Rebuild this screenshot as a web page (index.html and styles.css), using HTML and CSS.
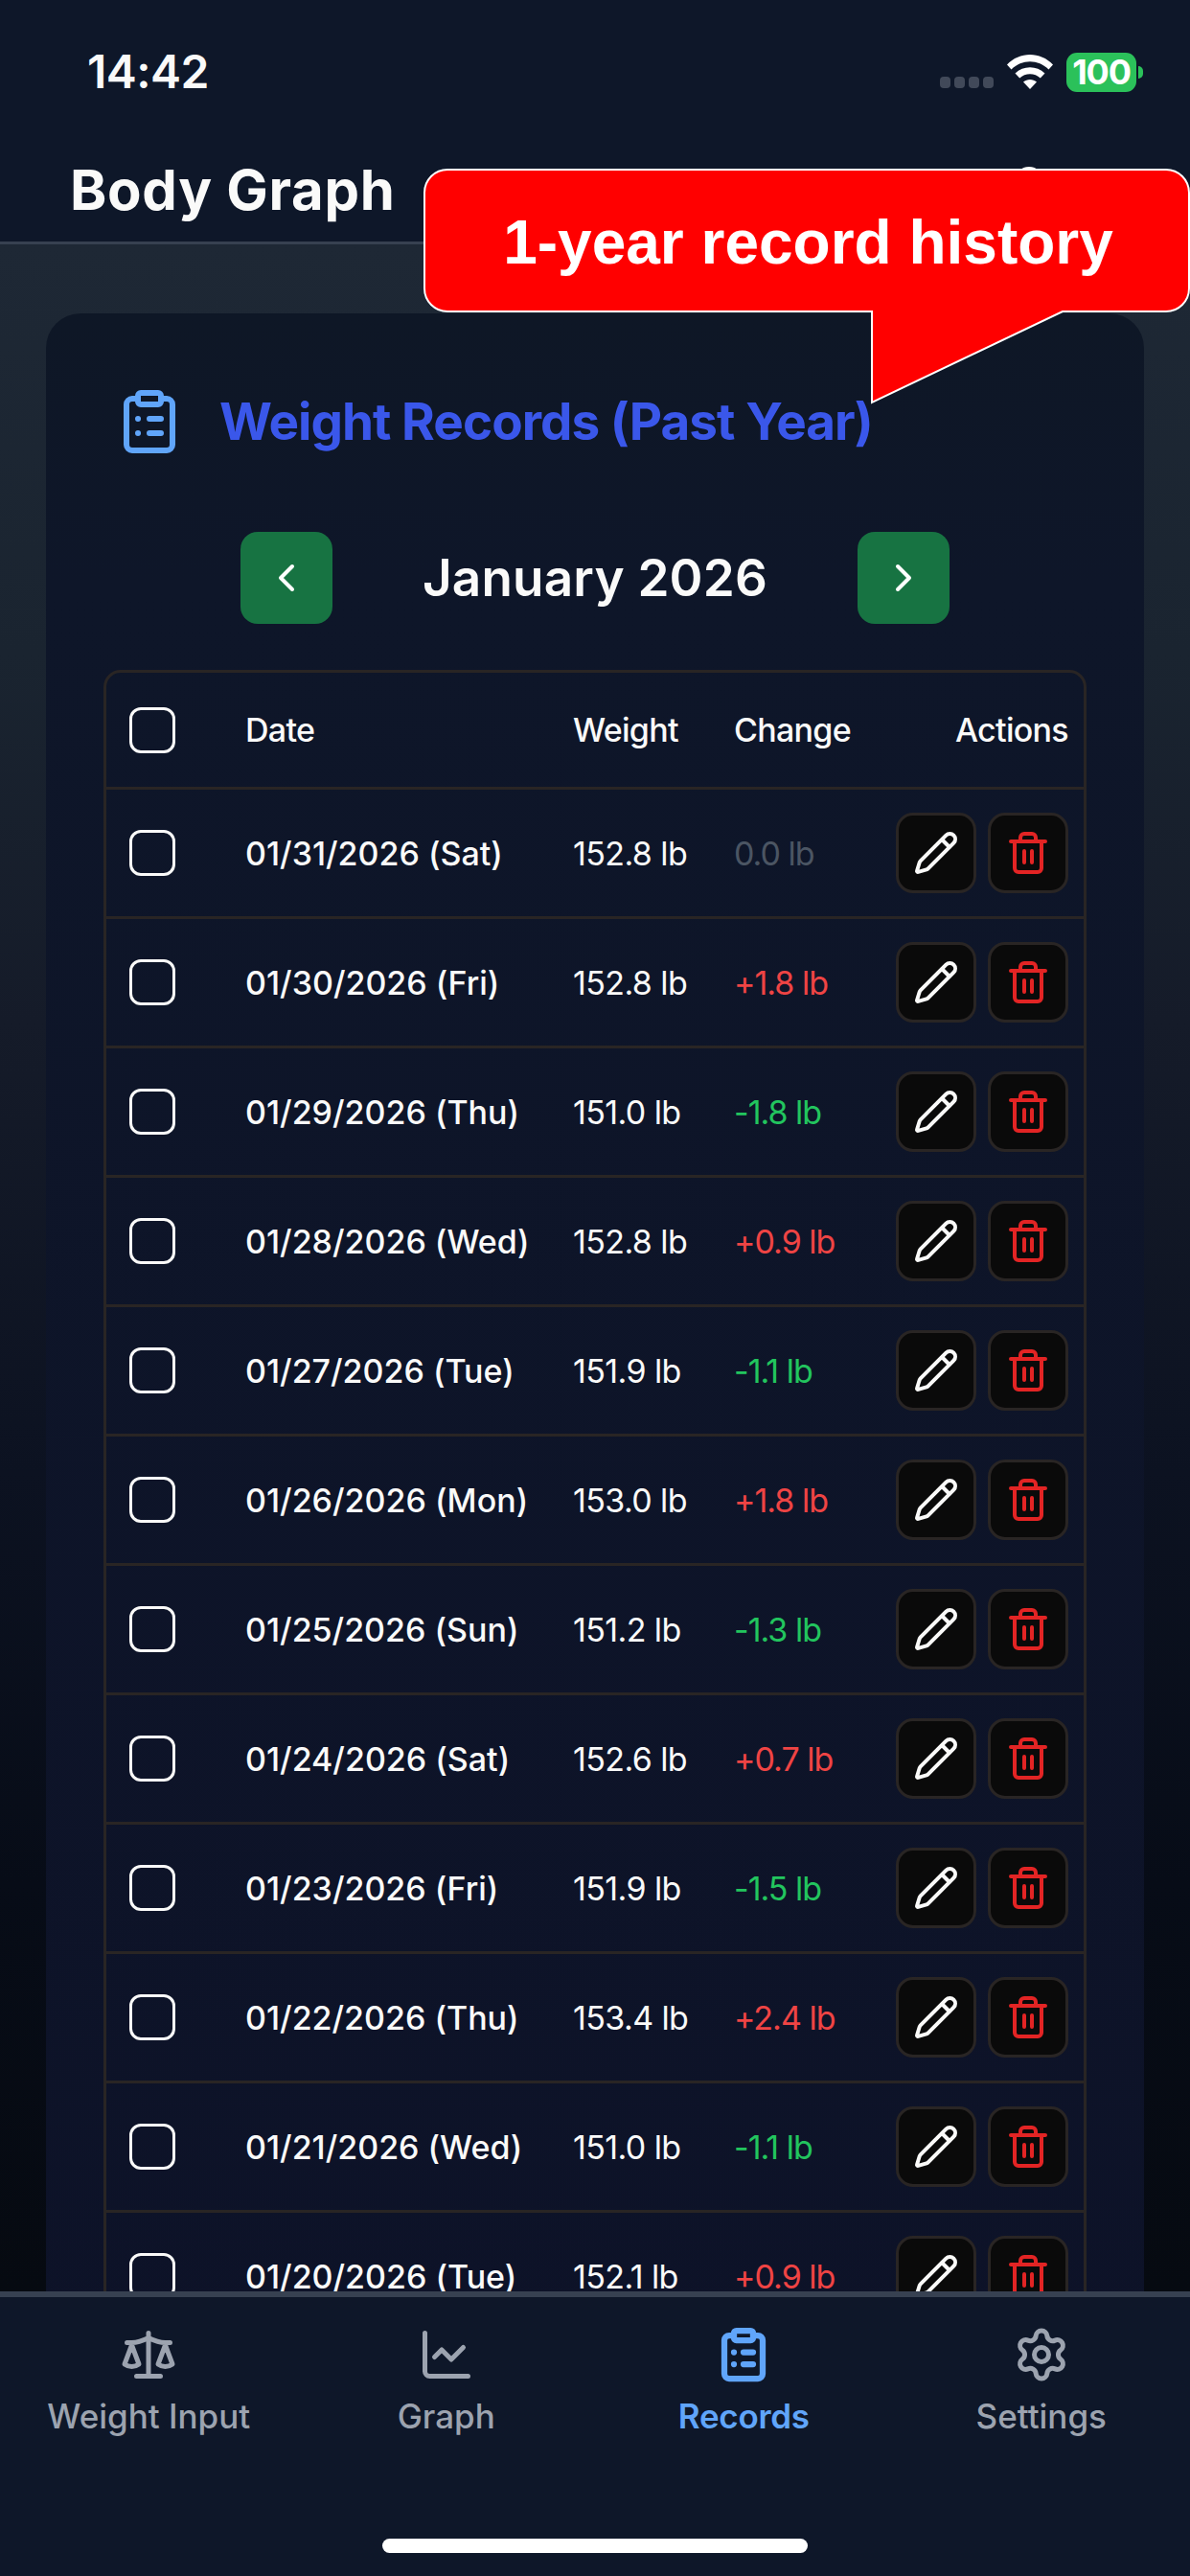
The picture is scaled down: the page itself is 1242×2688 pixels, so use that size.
FILE: index.html
```html
<!DOCTYPE html>
<html lang="en">
<head>
    <meta charset="UTF-8">
    <meta name="viewport" content="width=device-width, initial-scale=1.0">
    <title>Body Graph</title>
    <link rel="stylesheet" href="styles.css">
</head>
<body>
    <!-- icon set -->
    <svg class="sprite" xmlns="http://www.w3.org/2000/svg">
        <symbol id="clipboard" viewBox="0 0 24 24">
            <rect x="8" y="2" width="8" height="4" rx="1"/>
            <path d="M16 4h2a2 2 0 0 1 2 2v14a2 2 0 0 1-2 2H6a2 2 0 0 1-2-2V6a2 2 0 0 1 2-2h2M12 11h4M12 16h4M8 11h.01M8 16h.01"/>
        </symbol>
        <symbol id="left" viewBox="0 0 24 24"><path d="m15 18-6-6 6-6"/></symbol>
        <symbol id="right" viewBox="0 0 24 24"><path d="m9 18 6-6-6-6"/></symbol>
        <symbol id="pencil" viewBox="0 0 24 24">
            <path d="M21.174 6.812a1 1 0 0 0-3.986-3.987L3.842 16.174a2 2 0 0 0-.5.83l-1.321 4.352a.5.5 0 0 0 .623.622l4.353-1.32a2 2 0 0 0 .83-.497zM15 5l4 4"/>
        </symbol>
        <symbol id="trash" viewBox="0 0 24 24">
            <path d="M3 6h18M19 6v14a2 2 0 0 1-2 2H7a2 2 0 0 1-2-2V6M8 6V4a2 2 0 0 1 2-2h4a2 2 0 0 1 2 2v2M10 11v6M14 11v6"/>
        </symbol>
        <symbol id="scale" viewBox="0 0 24 24">
            <path d="m16 16 3-8 3 8c-.87.65-1.92 1-3 1s-2.13-.35-3-1ZM2 16l3-8 3 8c-.87.65-1.92 1-3 1s-2.13-.35-3-1ZM7 21h10M12 3v18M3 7h2c2 0 5-1 7-2 2 1 5 2 7 2h2"/>
        </symbol>
        <symbol id="chart" viewBox="0 0 24 24">
            <path d="M3 3v16a2 2 0 0 0 2 2h16M19 9l-5 5-4-4-3 3"/>
        </symbol>
        <symbol id="gear" viewBox="0 0 24 24">
            <path d="M9.671 4.136a2.34 2.34 0 0 1 4.659 0 2.34 2.34 0 0 0 3.319 1.915 2.34 2.34 0 0 1 2.33 4.033 2.34 2.34 0 0 0 0 3.831 2.34 2.34 0 0 1-2.33 4.033 2.34 2.34 0 0 0-3.319 1.915 2.34 2.34 0 0 1-4.659 0 2.34 2.34 0 0 0-3.32-1.915 2.34 2.34 0 0 1-2.33-4.033 2.34 2.34 0 0 0 0-3.831A2.34 2.34 0 0 1 6.35 6.051a2.34 2.34 0 0 0 3.319-1.915"/>
            <circle cx="12" cy="12" r="3"/>
        </symbol>
        <symbol id="user" viewBox="0 0 24 24">
            <circle cx="12" cy="7" r="4"/>
            <path d="M19 21v-2a4 4 0 0 0-4-4H9a4 4 0 0 0-4 4v2"/>
        </symbol>
    </svg>

    <div class="statusbar">
        <span class="time">14:42</span>
        <div class="signal"><i></i><i></i><i></i><i></i></div>
        <svg class="wifi" viewBox="0 0 48 36">
            <path d="M0 10.5C13-3.500 35-3.500 48 10.500L43.500 15.500C32.500 4.500 15.500 4.500 4.500 15.500Z"/>
            <path d="M8.500 19.500C17 11 31 11 39.500 19.500L34.800 24.600C29 18.800 19 18.800 13.200 24.600Z"/>
            <path d="M17 28.500C21 25 27 25 31 28.500L24 36Z"/>
        </svg>
        <span class="battery">100</span>
        <span class="nub"></span>
    </div>

    <header class="header">
        <h1>Body Graph</h1>
        <svg class="icon userIcon"><use href="#user"/></svg>
    </header>

    <main class="main">
        <section class="card">
            <div class="cardTitle">
                <svg class="icon"><use href="#clipboard"/></svg>
                <h2>Weight Records (Past Year)</h2>
            </div>
            <div class="monthNav">
                <button class="monthButton"><svg class="icon"><use href="#left"/></svg></button>
                <span class="month">January 2026</span>
                <button class="monthButton"><svg class="icon"><use href="#right"/></svg></button>
            </div>
            <div class="table">
                <div class="row head">
                    <span class="checkbox"></span>
                    <span class="date">Date</span>
                    <span class="headWeight">Weight</span>
                    <span class="headChange">Change</span>
                    <span class="headActions">Actions</span>
                </div>
                <div id="records"></div>
            </div>
        </section>
    </main>

    <nav class="tabbar">
        <div class="tabs">
            <a class="tab"><svg class="icon"><use href="#scale"/></svg>Weight Input</a>
            <a class="tab"><svg class="icon"><use href="#chart"/></svg>Graph</a>
            <a class="tab active"><svg class="icon"><use href="#clipboard"/></svg>Records</a>
            <a class="tab"><svg class="icon"><use href="#gear"/></svg>Settings</a>
        </div>
        <div class="homeIndicator"></div>
    </nav>

    <div class="callout">
        <svg class="bubble" viewBox="0 0 801 248">
            <path d="M26 2H776a24 24 0 0 1 24 24V126a24 24 0 0 1-24 24H668L469 245V150H26a24 24 0 0 1-24-24V26A24 24 0 0 1 26 2Z"/>
        </svg>
        <span class="calloutText">1-year record history</span>
    </div>

    <script>
        const records = [
            ['01/31/2026 (Sat)', '152.8', '0.0'],
            ['01/30/2026 (Fri)', '152.8', '+1.8'],
            ['01/29/2026 (Thu)', '151.0', '-1.8'],
            ['01/28/2026 (Wed)', '152.8', '+0.9'],
            ['01/27/2026 (Tue)', '151.9', '-1.1'],
            ['01/26/2026 (Mon)', '153.0', '+1.8'],
            ['01/25/2026 (Sun)', '151.2', '-1.3'],
            ['01/24/2026 (Sat)', '152.6', '+0.7'],
            ['01/23/2026 (Fri)', '151.9', '-1.5'],
            ['01/22/2026 (Thu)', '153.4', '+2.4'],
            ['01/21/2026 (Wed)', '151.0', '-1.1'],
            ['01/20/2026 (Tue)', '152.1', '+0.9']
        ];

        function changeClass(change) {
            if (change[0] === '+') return 'up';
            if (change[0] === '-') return 'down';
            return 'same';
        }

        document.getElementById('records').innerHTML = records.map(([date, weight, change]) => `
            <div class="row">
                <span class="checkbox"></span>
                <span class="date">${date}</span>
                <span class="weight">${weight} lb</span>
                <span class="change ${changeClass(change)}">${change} lb</span>
                <span class="actions">
                    <button class="action"><svg class="icon"><use href="#pencil"/></svg></button>
                    <button class="action delete"><svg class="icon"><use href="#trash"/></svg></button>
                </span>
            </div>
        `).join('');
    </script>
</body>
</html>
```
FILE: styles.css
```css
* {
    box-sizing: border-box;
}

body {
    display: flex;
    flex-direction: column;
    width: 1242px;
    height: 2688px;
    margin: 0;
    overflow: hidden;
    position: relative;
    background-color: #0e1729;
    color: #fafaf9;
    font-family: Inter, "Liberation Sans", sans-serif;
}

h1, h2 {
    margin: 0;
}

button {
    display: flex;
    align-items: center;
    justify-content: center;
    padding: 0;
    border: none;
}

.sprite {
    display: none;
}

.icon {
    display: block;
    flex: none;
    width: 48px;
    height: 48px;
    fill: none;
    stroke: currentColor;
    stroke-width: 2;
    stroke-linecap: round;
    stroke-linejoin: round;
}

.statusbar {
    display: flex;
    align-items: center;
    height: 132px;
    padding: 18px 49px 0 91px;
}

.time {
    flex: 1;
    font-size: 48px;
    font-weight: 600;
    line-height: 48px;
    letter-spacing: -0.5px;
}

.signal {
    display: flex;
    gap: 4px;
    margin: 21px 14px 0 0;
}

.signal i {
    width: 11px;
    height: 12px;
    border-radius: 4px;
    background-color: #414959;
}

.wifi {
    width: 48px;
    height: 36px;
    margin-right: 14px;
    fill: #fff;
}

.battery {
    width: 73px;
    height: 41px;
    border-radius: 11px;
    background-color: #2bc15a;
    color: #fff;
    font-size: 36px;
    font-weight: 700;
    line-height: 41px;
    letter-spacing: -1.2px;
    text-align: center;
}

.nub {
    width: 5px;
    height: 13px;
    margin-left: 2px;
    border-radius: 0 5px 5px 0;
    background-color: #2bc15a;
}

.header {
    display: flex;
    align-items: center;
    justify-content: space-between;
    height: 123px;
    padding: 0 132px 0 73px;
    border-bottom: 3px solid #374151;
}

.header h1 {
    padding-top: 12px;
    font-size: 58px;
    font-weight: 700;
    line-height: 72px;
    letter-spacing: 0.7px;
}

.userIcon {
    width: 72px;
    height: 72px;
    margin-top: 24px;
}

.main {
    flex: 1;
    min-height: 0;
    padding: 72px 48px 0;
    overflow: hidden;
    background: linear-gradient(#1e2835, #1a2430 20%, #151b29 38%, #0c1221 60%, #070c17 80%, #060a11);
}

.card {
    padding: 77px 60px 0;
    border-radius: 36px;
    background: linear-gradient(#0e1726, #0e1629 12%, #0d1228);
}

.cardTitle {
    display: flex;
    align-items: center;
    gap: 37px;
    padding-left: 12px;
    color: #60a5fa;
}

.cardTitle .icon {
    width: 72px;
    height: 72px;
}

.cardTitle h2 {
    color: #3a57ea;
    font-size: 53px;
    font-weight: 700;
    line-height: 72px;
    letter-spacing: -0.95px;
    white-space: nowrap;
}

.monthNav {
    display: flex;
    align-items: center;
    justify-content: space-between;
    margin: 79px 143px 48px;
}

.monthButton {
    width: 96px;
    height: 96px;
    border-radius: 18px;
    background-color: #177342;
    color: #fff;
}

.month {
    font-size: 53px;
    font-weight: 600;
    letter-spacing: 0.2px;
}

.table {
    height: 2000px;
    border: 3px solid #292524;
    border-radius: 18px;
}

.row {
    display: grid;
    grid-template-columns: 121px 342px 168px 168px 1fr;
    align-items: center;
    height: 135px;
    padding: 0 16px 0 24px;
    border-bottom: 3px solid #292524;
    font-size: 34px;
    white-space: nowrap;
}

.head {
    height: 122px;
    font-weight: 500;
    letter-spacing: -0.7px;
}

.checkbox {
    width: 48px;
    height: 48px;
    border: 3px solid #fafaf9;
    border-radius: 12px;
}

.date {
    font-weight: 500;
}

.weight {
    letter-spacing: -0.6px;
}

.change {
    letter-spacing: -1px;
}

.headActions {
    text-align: right;
}

.up {
    color: #ef4444;
}

.down {
    color: #22c55e;
}

.same {
    color: #4b5563;
}

.actions {
    display: flex;
    justify-content: flex-end;
    gap: 12px;
}

.action {
    width: 84px;
    height: 84px;
    border: 3px solid #292524;
    border-radius: 18px;
    background-color: #0a0a0a;
    color: #fafaf9;
}

.delete {
    color: #e32424;
}

.tabbar {
    display: flex;
    flex-direction: column;
    align-items: center;
    justify-content: space-between;
    height: 297px;
    padding: 30px 0 24px;
    border-top: 6px solid #374151;
    background-color: #0e1729;
}

.tabs {
    display: grid;
    grid-template-columns: repeat(4, 1fr);
    width: 100%;
}

.tab {
    display: flex;
    flex-direction: column;
    align-items: center;
    gap: 13px;
    color: #9ca3af;
    font-size: 35px;
    font-weight: 500;
    line-height: 42px;
}

.tab .icon {
    width: 60px;
    height: 60px;
}

.active {
    color: #60a5fa;
    font-weight: 600;
    letter-spacing: -0.3px;
}

.active .icon {
    stroke-width: 2.5;
}

.homeIndicator {
    width: 444px;
    height: 15px;
    border-radius: 8px;
    background-color: #fff;
}

.callout {
    position: absolute;
    top: 175px;
    left: 441px;
    width: 801px;
    height: 248px;
}

.bubble {
    display: block;
    width: 801px;
    height: 248px;
    fill: #f00;
    stroke: #fff;
    stroke-width: 2;
}

.calloutText {
    position: absolute;
    top: 1px;
    left: 2px;
    width: 100%;
    color: #fff;
    font-family: "Liberation Sans", Arial, sans-serif;
    font-size: 64px;
    font-weight: 700;
    line-height: 154px;
    text-align: center;
}
```
